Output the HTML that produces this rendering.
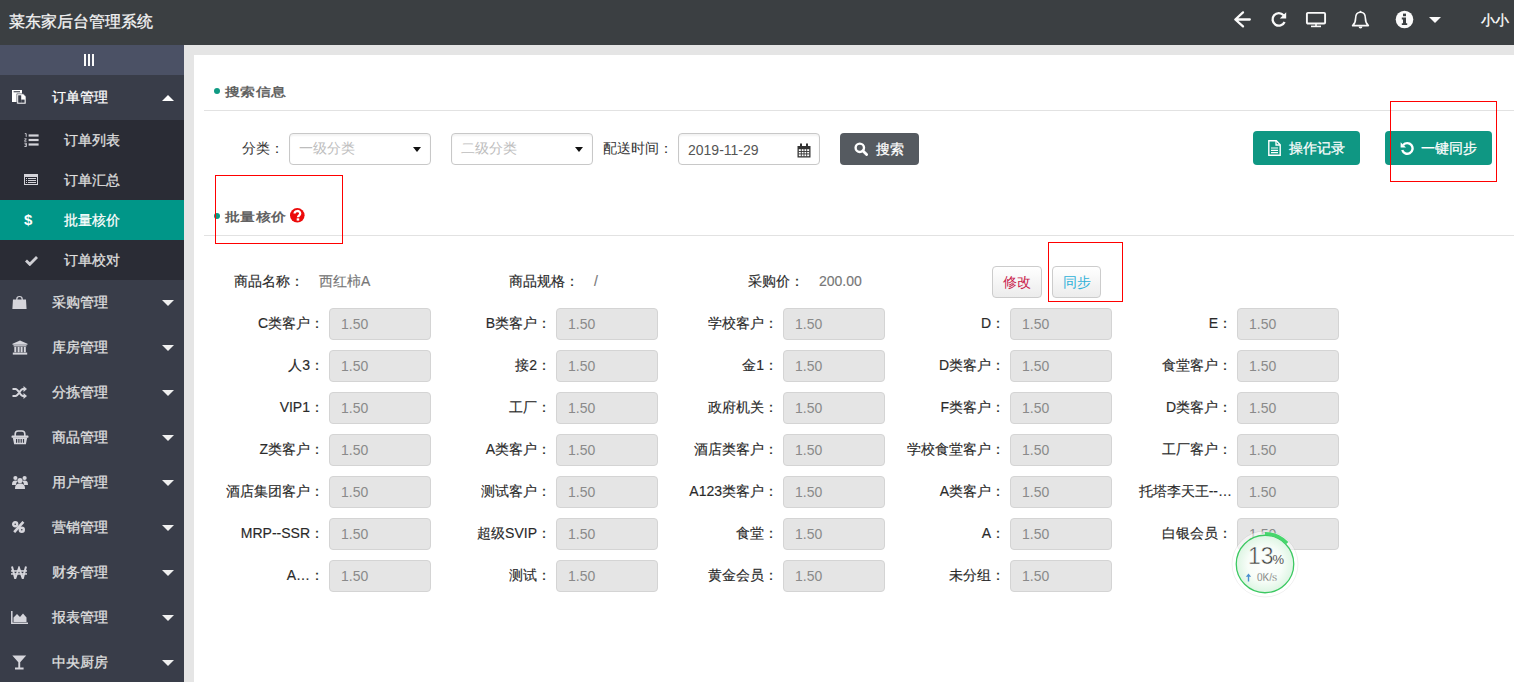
<!DOCTYPE html><html><head><meta charset="utf-8"><title>菜东家后台管理系统</title><style>
*{box-sizing:border-box;margin:0;padding:0}
html,body{width:1514px;height:682px;overflow:hidden;background:#fff}
body{position:relative;font-family:"Liberation Sans",sans-serif;font-size:14px;color:#333}
.a{position:absolute}
#hd{left:0;top:0;width:1514px;height:45px;background:#3b3f42}
#hd .title{left:9px;top:12px;font-size:16px;line-height:20px;color:#f4f4f4;white-space:nowrap;-webkit-text-stroke:0.3px #f4f4f4}
#side{left:0;top:45px;width:184px;height:637px;background:#393d49;overflow:hidden}
#tog{left:0;top:0;width:184px;height:30px;background:#4b5165}
.nav{left:0;width:184px;height:45px;color:#e2e2e2}
.nav .t{left:52px;top:0;line-height:45px;white-space:nowrap;-webkit-text-stroke:0.25px currentColor}
.nav .ic{left:12px;top:15px;width:16px;height:16px}
.nav .car{left:162px;top:20px;width:0;height:0;border-left:6px solid transparent;border-right:6px solid transparent;border-top:6px solid #f0f0f0}
.sub{left:0;width:184px;height:40px;background:#2a2c35;color:#e0e0e0}
.sub .t{left:64px;top:0;line-height:40px;white-space:nowrap;-webkit-text-stroke:0.25px currentColor}
.sub .ic{left:24px;top:13px;width:14px;height:14px}
#gray{left:184px;top:45px;width:1330px;height:637px;background:#e5e5e5}
#panel{left:194px;top:55px;width:1320px;height:627px;background:#fff}
.dot{width:6px;height:6px;border-radius:50%;background:#0f9a83}
.sect{font-weight:bold;font-size:14px;transform:scale(1.09,0.88);transform-origin:0 50%;color:#626262;white-space:nowrap;line-height:20px}
.hline{height:1px;background:#e2e2e2}
.lbl{white-space:nowrap;line-height:20px;color:#2a2a2a;-webkit-text-stroke:0.15px currentColor}
.sel{height:32px;border:1px solid #c8c8c8;border-radius:4px;background:#fff;box-shadow:inset 0 2px 2px rgba(0,0,0,.05)}
.sel .ph{left:9px;top:-1px;line-height:30px;color:#bdbdbd;white-space:nowrap}
.sel .cr{right:9px;top:13px;width:0;height:0;border-left:4px solid transparent;border-right:4px solid transparent;border-top:5px solid #111}
.btn{height:34px;border-radius:4px;background:#0f9783;color:#fff;white-space:nowrap;-webkit-text-stroke:0.25px #fff}
.inp{width:102px;height:32px;border:1px solid #d4d4d4;border-radius:4px;background:#e5e5e5;color:#8a8a8a}
.inp span{position:absolute;left:11px;top:0;line-height:30px}
.gl{width:110px;text-align:right;white-space:nowrap;line-height:20px;color:#2a2a2a;-webkit-text-stroke:0.15px #2a2a2a}
.rbox{border:1px solid #f00}
.wbtn{height:32px;width:49px;border:1px solid #ccc;border-radius:4px;background:linear-gradient(#fff,#ececec);line-height:30px;text-align:center}
</style></head><body>
<div id="hd" class="a"><div class="a title">菜东家后台管理系统</div>
<svg class="a" style="left:1233px;top:10px" width="20" height="19" viewBox="0 0 20 19"><path d="M10 2.4 L2.3 9.5 L10 16.4 M2.8 9.5 H16.8" fill="none" stroke="#fafafa" stroke-width="2.3" stroke-linecap="round" stroke-linejoin="round"/></svg>
<svg class="a" style="left:1270px;top:11px" width="18" height="17" viewBox="0 0 18 17"><path d="M13.6 4.2 A6.3 6.3 0 1 0 14.6 11" fill="none" stroke="#fafafa" stroke-width="2.3"/><path d="M16.2 1.2 V7.6 H9.8 Z" fill="#fafafa"/></svg>
<svg class="a" style="left:1305px;top:11px" width="22" height="17" viewBox="0 0 22 17"><rect x="1.9" y="1.9" width="18.2" height="10.6" rx="1" fill="none" stroke="#fafafa" stroke-width="1.9"/><rect x="6" y="14.6" width="10" height="1.6" fill="#fafafa"/><rect x="10.2" y="13" width="1.6" height="2" fill="#fafafa"/></svg>
<svg class="a" style="left:1351px;top:10px" width="19" height="20" viewBox="0 0 19 20"><path d="M9.5 2.2 C5.6 2.2 4.6 5.5 4.6 8.2 C4.6 11.8 3.8 13.6 1.6 15.6 H17.4 C15.2 13.6 14.4 11.8 14.4 8.2 C14.4 5.5 13.4 2.2 9.5 2.2 Z" fill="none" stroke="#fafafa" stroke-width="1.6" stroke-linejoin="round"/><circle cx="9.5" cy="1.7" r="1" fill="#fafafa"/><path d="M7.6 16.6 A1.9 1.9 0 0 0 11.4 16.6" fill="#fafafa"/></svg>
<svg class="a" style="left:1395px;top:10px" width="19" height="19" viewBox="0 0 19 19"><circle cx="9.5" cy="9.5" r="8.8" fill="#fafafa"/><rect x="8" y="3.6" width="3" height="2.6" fill="#3b3f42"/><path d="M6.8 7.6 H11 V13.2 H12.2 V15 H6.8 V13.2 H8 V9.4 H6.8 Z" fill="#3b3f42"/></svg>
<div class="a" style="left:1429px;top:17px;width:0;height:0;border-left:6px solid transparent;border-right:6px solid transparent;border-top:6px solid #fafafa"></div>
<div class="a" style="left:1481px;top:10px;line-height:20px;color:#fff;white-space:nowrap;-webkit-text-stroke:0.3px #fff">小小</div>
</div>
<div id="side" class="a"><div id="tog" class="a">
<svg class="a" style="left:84px;top:9px" width="10" height="12" shape-rendering="crispEdges"><rect x="0" y="0" width="2" height="12" fill="#fafafa"/><rect x="4" y="0" width="2" height="12" fill="#fafafa"/><rect x="8" y="0" width="2" height="12" fill="#fafafa"/></svg>
</div>
<div class="a nav" style="top:30px;color:#fff"><svg class="a" style="left:12px;top:15px" width="15" height="15" viewBox="0 0 15 15"><rect x="0" y="0" width="10" height="12" fill="#fff"/><rect x="1.6" y="1.2" width="6.4" height="1.1" fill="#393d49"/><path d="M4.8 3.8 H11.3 L14 6.5 V14 H4.8 Z" fill="#fff" stroke="#393d49" stroke-width="0.6"/><rect x="6.2" y="5.3" width="3" height="7.4" fill="#393d49"/><rect x="9.2" y="9.6" width="3.4" height="3.1" fill="#393d49"/></svg><div class="a t">订单管理</div><div class="a" style="left:162px;top:20px;width:0;height:0;border-left:6px solid transparent;border-right:6px solid transparent;border-bottom:6px solid #fff"></div></div>
<div class="a sub" style="top:75px;"><svg class="a" style="left:24px;top:13px" width="15" height="14" viewBox="0 0 15 14"><path d="M0.8 0.6 h1.4 v3.2 M0.4 5.8 h2 l-2 2.4 h2.2 M0.4 10.2 h2 v3.3 h-2 M0.8 11.8 h1.6" fill="none" stroke="#d4d4da" stroke-width="0.9"/><rect x="4.6" y="1.4" width="10" height="2.2" fill="#d4d4da"/><rect x="4.6" y="5.9" width="10" height="2.2" fill="#d4d4da"/><rect x="4.6" y="10.4" width="10" height="2.2" fill="#d4d4da"/></svg><div class="a t">订单列表</div></div>
<div class="a sub" style="top:115px;"><svg class="a" style="left:24px;top:14px" width="14" height="11" viewBox="0 0 14 11" shape-rendering="crispEdges"><rect x="0" y="0" width="14" height="11" fill="#d4d4da"/><rect x="1" y="3" width="12" height="7" fill="#2a2c35"/><rect x="2" y="4" width="1" height="1" fill="#d4d4da"/><rect x="4" y="4" width="8" height="1" fill="#d4d4da"/><rect x="2" y="6" width="1" height="1" fill="#d4d4da"/><rect x="4" y="6" width="8" height="1" fill="#d4d4da"/><rect x="2" y="8" width="1" height="1" fill="#d4d4da"/><rect x="4" y="8" width="8" height="1" fill="#d4d4da"/></svg><div class="a t">订单汇总</div></div>
<div class="a sub" style="top:155px;background:#009688;color:#fff;"><div class="a" style="left:24px;top:0;line-height:40px;font-weight:bold;font-size:15px;color:#fff">$</div><div class="a t">批量核价</div></div>
<div class="a sub" style="top:195px;"><svg class="a" style="left:25px;top:15px" width="13" height="11" viewBox="0 0 13 11"><path d="M1 5.5 L4.8 9.3 L12 2" fill="none" stroke="#cfcfd4" stroke-width="2.8"/></svg><div class="a t">订单校对</div></div>
<div class="a nav" style="top:235px"><svg class="a" style="left:12px;top:15px" width="15" height="15" viewBox="0 0 15 15"><path d="M1 4.6 H14 L14.6 14 H0.4 Z" fill="#d6d6dc"/><path d="M4.8 6.5 V4.2 A2.7 2.7 0 0 1 10.2 4.2 V6.5" fill="none" stroke="#d6d6dc" stroke-width="1.2"/></svg><div class="a t">采购管理</div><div class="a car"></div></div>
<div class="a nav" style="top:280px"><svg class="a" style="left:12px;top:15px" width="16" height="15" viewBox="0 0 16 15"><path d="M8 0.5 L15.5 3.8 V4.8 H0.5 V3.8 Z" fill="#d6d6dc"/><rect x="1.5" y="5.2" width="13" height="1.2" fill="#d6d6dc"/><rect x="2.3" y="6.8" width="2" height="5.5" fill="#d6d6dc"/><rect x="5.6" y="6.8" width="2" height="5.5" fill="#d6d6dc"/><rect x="8.6" y="6.8" width="2" height="5.5" fill="#d6d6dc"/><rect x="11.8" y="6.8" width="2" height="5.5" fill="#d6d6dc"/><rect x="0.8" y="12.6" width="14.4" height="2" fill="#d6d6dc"/></svg><div class="a t">库房管理</div><div class="a car"></div></div>
<div class="a nav" style="top:325px"><svg class="a" style="left:12px;top:16px" width="15" height="13" viewBox="0 0 15 13"><path d="M0.5 3 H3.5 C6.5 3 8 10 11 10 H12.5 M0.5 10 H3.5 C6.5 10 8 3 11 3 H12.5" fill="none" stroke="#d6d6dc" stroke-width="2"/><path d="M11.5 0 L15 3 L11.5 6 Z M11.5 7 L15 10 L11.5 13 Z" fill="#d6d6dc"/></svg><div class="a t">分拣管理</div><div class="a car"></div></div>
<div class="a nav" style="top:370px"><svg class="a" style="left:11px;top:15px" width="18" height="15" viewBox="0 0 18 15"><path d="M4.2 6 V4 C4.2 1.8 5.2 1 7 1 H11 C12.8 1 13.8 1.8 13.8 4 V6" fill="none" stroke="#d6d6dc" stroke-width="1.6"/><rect x="0.6" y="5.6" width="16.8" height="2.2" rx="0.6" fill="#d6d6dc"/><path d="M1.8 7.6 H16.2 L14.9 14.2 H3.1 Z" fill="#d6d6dc"/><path d="M5.6 9 V12.8 M7.9 9 V12.8 M10.2 9 V12.8 M12.5 9 V12.8" stroke="#393d49" stroke-width="1.2"/></svg><div class="a t">商品管理</div><div class="a car"></div></div>
<div class="a nav" style="top:415px"><svg class="a" style="left:12px;top:15px" width="16" height="15" viewBox="0 0 16 15"><circle cx="8" cy="5.6" r="2.6" fill="#d6d6dc"/><circle cx="3.4" cy="3" r="2.1" fill="#d6d6dc"/><circle cx="12.6" cy="3" r="2.1" fill="#d6d6dc"/><path d="M3 14 C3 10 4.5 8.6 8 8.6 C11.5 8.6 13 10 13 14 Z" fill="#d6d6dc"/><path d="M0 10 C0 6.8 1 5.6 3.4 5.6 C4.6 5.6 5.2 5.9 5.6 6.4 C4.6 7.2 4.2 8 3.9 10 Z M16 10 C16 6.8 15 5.6 12.6 5.6 C11.4 5.6 10.8 5.9 10.4 6.4 C11.4 7.2 11.8 8 12.1 10 Z" fill="#d6d6dc"/></svg><div class="a t">用户管理</div><div class="a car"></div></div>
<div class="a nav" style="top:460px"><svg class="a" style="left:12px;top:16px" width="13" height="12" viewBox="0 0 13 12"><circle cx="3.2" cy="3.2" r="2.0" fill="none" stroke="#d6d6dc" stroke-width="2.4"/><circle cx="9.8" cy="8.8" r="2.0" fill="none" stroke="#d6d6dc" stroke-width="2.4"/><path d="M11.4 0.8 L2.2 11.2" stroke="#d6d6dc" stroke-width="2.6"/></svg><div class="a t">营销管理</div><div class="a car"></div></div>
<div class="a nav" style="top:505px"><svg class="a" style="left:11px;top:16px" width="16" height="13" viewBox="0 0 16 13"><path d="M1 0.5 L4.2 12.5 L8 2 L11.8 12.5 L15 0.5" fill="none" stroke="#d6d6dc" stroke-width="2" stroke-linejoin="miter"/><rect x="0" y="4.2" width="16" height="1.5" fill="#d6d6dc"/><rect x="0" y="7.2" width="16" height="1.5" fill="#d6d6dc"/></svg><div class="a t">财务管理</div><div class="a car"></div></div>
<div class="a nav" style="top:550px"><svg class="a" style="left:11px;top:16px" width="17" height="13" viewBox="0 0 17 13"><path d="M0.8 0 V12.2 H17" fill="none" stroke="#d6d6dc" stroke-width="1.5"/><path d="M2.5 11 V6.5 L6 3 L9 6 L12 2.5 L15.5 6.5 V11 Z" fill="#d6d6dc"/></svg><div class="a t">报表管理</div><div class="a car"></div></div>
<div class="a nav" style="top:595px"><svg class="a" style="left:12px;top:15px" width="15" height="15" viewBox="0 0 15 15"><path d="M0.3 0.6 H14.2 L8.2 7.2 V12.6 H11.6 V14.4 H3 V12.6 H6.3 V7.2 Z" fill="#d6d6dc"/></svg><div class="a t">中央厨房</div><div class="a car"></div></div>
</div>
<div id="gray" class="a"></div><div id="panel" class="a"></div>
<div class="a dot" style="left:214px;top:88px"></div>
<div class="a sect" style="left:225px;top:82px">搜索信息</div>
<div class="a hline" style="left:204px;top:110px;width:1310px"></div>
<div class="a lbl" style="left:242px;top:138px;color:#333;-webkit-text-stroke:0">分类：</div>
<div class="a sel" style="left:289px;top:133px;width:142px"><div class="a ph">一级分类</div><div class="a cr"></div></div>
<div class="a sel" style="left:451px;top:133px;width:142px"><div class="a ph">二级分类</div><div class="a cr"></div></div>
<div class="a lbl" style="left:603px;top:138px;color:#333;-webkit-text-stroke:0">配送时间：</div>
<div class="a sel" style="left:678px;top:133px;width:142px"><div class="a" style="left:9px;top:1px;line-height:30px;color:#555">2019-11-29</div>
<svg class="a" style="left:118px;top:9px" width="14" height="15" viewBox="0 0 14 15"><path d="M0.5 3 H13.5 V14.5 H0.5 Z" fill="#333"/><rect x="3" y="0.5" width="2" height="3.5" fill="#333"/><rect x="9" y="0.5" width="2" height="3.5" fill="#333"/><path d="M1.8 6.2 H12.2 V13.2 H1.8 Z" fill="#fff"/><path d="M4.3 6 V13.5 M7 6 V13.5 M9.7 6 V13.5 M1.5 8.5 H12.5 M1.5 10.9 H12.5" stroke="#333" stroke-width="0.9"/></svg></div>
<div class="a btn" style="left:840px;top:133px;width:79px;height:32px;background:#555a60"><svg class="a" style="left:14px;top:9px" width="14" height="14" viewBox="0 0 14 14"><circle cx="5.8" cy="5.8" r="4.2" fill="none" stroke="#fff" stroke-width="2.4"/><path d="M8.8 8.8 L12.6 12.6" stroke="#fff" stroke-width="2.8" stroke-linecap="round"/></svg><div class="a" style="left:36px;top:0;line-height:32px">搜索</div></div>
<div class="a btn" style="left:1253px;top:131px;width:107px"><svg class="a" style="left:15px;top:9px" width="13" height="16" viewBox="0 0 13 16"><path d="M0.8 0.8 H8.3 L12.2 4.7 V15.2 H0.8 Z" fill="none" stroke="#fff" stroke-width="1.4"/><path d="M8 1 V5 H12" fill="none" stroke="#fff" stroke-width="1.3"/><path d="M3 8 H10 M3 10.3 H10 M3 12.6 H10" stroke="#fff" stroke-width="1.2"/></svg><div class="a" style="left:36px;top:0;line-height:34px">操作记录</div></div>
<div class="a btn" style="left:1385px;top:131px;width:107px"><svg class="a" style="left:15px;top:10px" width="14" height="14" viewBox="0 0 14 14"><path d="M3.2 4 A5.3 5.3 0 1 1 2.2 9" fill="none" stroke="#fff" stroke-width="2.4"/><path d="M0.6 1.2 V6.6 H6 Z" fill="#fff"/></svg><div class="a" style="left:36px;top:0;line-height:34px">一键同步</div></div>
<div class="a rbox" style="left:1390px;top:101px;width:107px;height:81px"></div>
<div class="a dot" style="left:214px;top:213px"></div>
<div class="a sect" style="left:225px;top:207px">批量核价</div>
<svg class="a" style="left:290px;top:208px" width="15" height="15" viewBox="0 0 15 15"><circle cx="7.3" cy="7.3" r="7.3" fill="#ec0a0a"/><path d="M4.6 5.6 C4.6 2.2 10.2 2.2 10.2 5.4 C10.2 7.4 8 7.6 8 9.2" fill="none" stroke="#fff" stroke-width="2.3"/><rect x="6.7" y="10.3" width="2.5" height="2.3" fill="#fff"/></svg>
<div class="a hline" style="left:204px;top:235px;width:1310px"></div>
<div class="a rbox" style="left:215px;top:175px;width:128px;height:69px"></div>
<div class="a lbl" style="left:234px;top:271px">商品名称：</div>
<div class="a lbl" style="left:319px;top:271px;color:#777">西红柿A</div>
<div class="a lbl" style="left:509px;top:271px">商品规格：</div>
<div class="a lbl" style="left:594px;top:271px;color:#777">/</div>
<div class="a lbl" style="left:748px;top:271px">采购价：</div>
<div class="a lbl" style="left:819px;top:271px;color:#777">200.00</div>
<div class="a wbtn" style="left:992px;width:50px;top:266px;color:#c9204a">修改</div>
<div class="a wbtn" style="left:1052px;top:266px;color:#2fb1d8">同步</div>
<div class="a rbox" style="left:1048px;top:242px;width:75px;height:60px"></div>
<div class="a gl" style="left:214px;top:313px">C类客户：</div>
<div class="a inp" style="left:329px;top:308px"><span>1.50</span></div>
<div class="a gl" style="left:441px;top:313px">B类客户：</div>
<div class="a inp" style="left:556px;top:308px"><span>1.50</span></div>
<div class="a gl" style="left:668px;top:313px">学校客户：</div>
<div class="a inp" style="left:783px;top:308px"><span>1.50</span></div>
<div class="a gl" style="left:895px;top:313px">D：</div>
<div class="a inp" style="left:1010px;top:308px"><span>1.50</span></div>
<div class="a gl" style="left:1122px;top:313px">E：</div>
<div class="a inp" style="left:1237px;top:308px"><span>1.50</span></div>
<div class="a gl" style="left:214px;top:355px">人3：</div>
<div class="a inp" style="left:329px;top:350px"><span>1.50</span></div>
<div class="a gl" style="left:441px;top:355px">接2：</div>
<div class="a inp" style="left:556px;top:350px"><span>1.50</span></div>
<div class="a gl" style="left:668px;top:355px">金1：</div>
<div class="a inp" style="left:783px;top:350px"><span>1.50</span></div>
<div class="a gl" style="left:895px;top:355px">D类客户：</div>
<div class="a inp" style="left:1010px;top:350px"><span>1.50</span></div>
<div class="a gl" style="left:1122px;top:355px">食堂客户：</div>
<div class="a inp" style="left:1237px;top:350px"><span>1.50</span></div>
<div class="a gl" style="left:214px;top:397px">VIP1：</div>
<div class="a inp" style="left:329px;top:392px"><span>1.50</span></div>
<div class="a gl" style="left:441px;top:397px">工厂：</div>
<div class="a inp" style="left:556px;top:392px"><span>1.50</span></div>
<div class="a gl" style="left:668px;top:397px">政府机关：</div>
<div class="a inp" style="left:783px;top:392px"><span>1.50</span></div>
<div class="a gl" style="left:895px;top:397px">F类客户：</div>
<div class="a inp" style="left:1010px;top:392px"><span>1.50</span></div>
<div class="a gl" style="left:1122px;top:397px">D类客户：</div>
<div class="a inp" style="left:1237px;top:392px"><span>1.50</span></div>
<div class="a gl" style="left:214px;top:439px">Z类客户：</div>
<div class="a inp" style="left:329px;top:434px"><span>1.50</span></div>
<div class="a gl" style="left:441px;top:439px">A类客户：</div>
<div class="a inp" style="left:556px;top:434px"><span>1.50</span></div>
<div class="a gl" style="left:668px;top:439px">酒店类客户：</div>
<div class="a inp" style="left:783px;top:434px"><span>1.50</span></div>
<div class="a gl" style="left:895px;top:439px">学校食堂客户：</div>
<div class="a inp" style="left:1010px;top:434px"><span>1.50</span></div>
<div class="a gl" style="left:1122px;top:439px">工厂客户：</div>
<div class="a inp" style="left:1237px;top:434px"><span>1.50</span></div>
<div class="a gl" style="left:214px;top:481px">酒店集团客户：</div>
<div class="a inp" style="left:329px;top:476px"><span>1.50</span></div>
<div class="a gl" style="left:441px;top:481px">测试客户：</div>
<div class="a inp" style="left:556px;top:476px"><span>1.50</span></div>
<div class="a gl" style="left:668px;top:481px">A123类客户：</div>
<div class="a inp" style="left:783px;top:476px"><span>1.50</span></div>
<div class="a gl" style="left:895px;top:481px">A类客户：</div>
<div class="a inp" style="left:1010px;top:476px"><span>1.50</span></div>
<div class="a gl" style="left:1122px;top:481px">托塔李天王--…</div>
<div class="a inp" style="left:1237px;top:476px"><span>1.50</span></div>
<div class="a gl" style="left:214px;top:523px">MRP--SSR：</div>
<div class="a inp" style="left:329px;top:518px"><span>1.50</span></div>
<div class="a gl" style="left:441px;top:523px">超级SVIP：</div>
<div class="a inp" style="left:556px;top:518px"><span>1.50</span></div>
<div class="a gl" style="left:668px;top:523px">食堂：</div>
<div class="a inp" style="left:783px;top:518px"><span>1.50</span></div>
<div class="a gl" style="left:895px;top:523px">A：</div>
<div class="a inp" style="left:1010px;top:518px"><span>1.50</span></div>
<div class="a gl" style="left:1122px;top:523px">白银会员：</div>
<div class="a inp" style="left:1237px;top:518px"><span>1.50</span></div>
<div class="a gl" style="left:214px;top:565px">A…：</div>
<div class="a inp" style="left:329px;top:560px"><span>1.50</span></div>
<div class="a gl" style="left:441px;top:565px">测试：</div>
<div class="a inp" style="left:556px;top:560px"><span>1.50</span></div>
<div class="a gl" style="left:668px;top:565px">黄金会员：</div>
<div class="a inp" style="left:783px;top:560px"><span>1.50</span></div>
<div class="a gl" style="left:895px;top:565px">未分组：</div>
<div class="a inp" style="left:1010px;top:560px"><span>1.50</span></div>
<svg class="a" style="left:1230px;top:529px" width="70" height="70" viewBox="0 0 70 70"><defs><radialGradient id="g" cx="50%" cy="50%" r="50%"><stop offset="0" stop-color="#fff"/><stop offset="0.6" stop-color="#f7fdf8"/><stop offset="1" stop-color="#ddf5e3"/></radialGradient></defs><circle cx="35" cy="35" r="33" fill="rgba(255,255,255,0.55)" stroke="rgba(0,0,0,0.06)" stroke-width="1"/><circle cx="35" cy="35" r="28.75" fill="url(#g)" stroke="#3cc862" stroke-width="1.3"/><path d="M35 4.6 A30.4 30.4 0 0 1 57.15 14.2" fill="none" stroke="#47d66c" stroke-width="3.4"/></svg>
<div class="a" style="left:1248px;top:544px;font-size:23px;line-height:25px;color:#3e3e3e;white-space:nowrap;-webkit-text-stroke:0.5px #f6fcf7">13<span style="font-size:13px;margin-left:-1px;-webkit-text-stroke:0;color:#555">%</span></div>
<svg class="a" style="left:1245px;top:573px" width="7" height="9" viewBox="0 0 7 9"><path d="M3.5 0.6 L6.2 3.8 H4.2 V8.5 H2.8 V3.8 H0.8 Z" fill="#4a90d0"/></svg>
<div class="a" style="left:1257px;top:572px;font-size:10px;line-height:11px;color:#444;white-space:nowrap;-webkit-text-stroke:0.3px #f4fbf5">0K/s</div>
</body></html>
